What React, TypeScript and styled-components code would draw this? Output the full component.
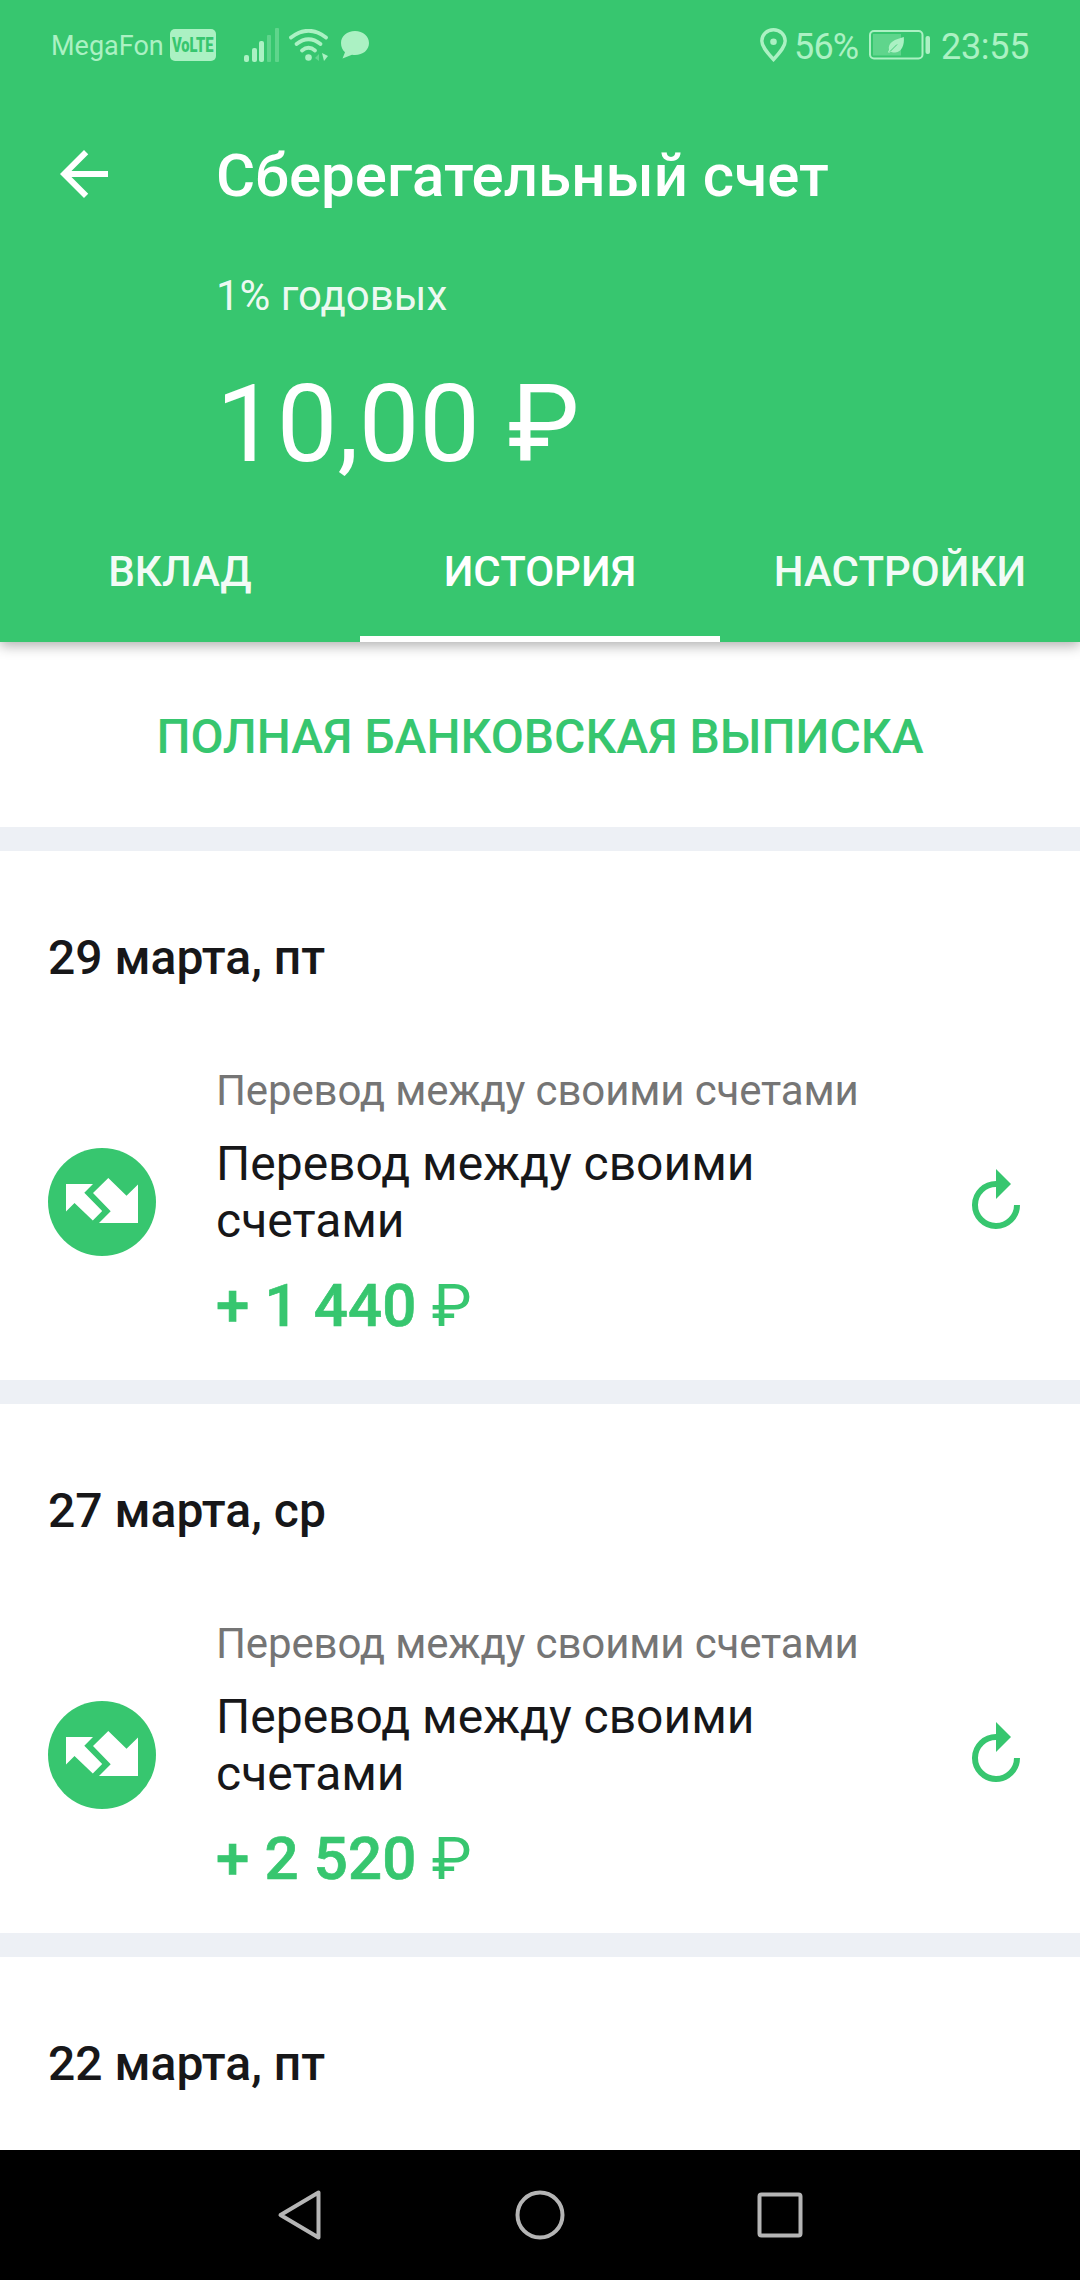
import React from 'react';
import styled, { createGlobalStyle } from 'styled-components';

const GREEN = '#37c66f';
const STATUS = '#abf1c3';

const GlobalStyle = createGlobalStyle`
  body { margin: 0; background: #fff; }
  * { box-sizing: border-box; }
`;

const Screen = styled.div`
  display: flex;
  flex-direction: column;
  width: 1080px;
  height: 2280px;
  overflow: hidden;
  background: #fff;
  font-family: Roboto, 'Noto Sans', sans-serif;
  color: #171719;
`;

const Header = styled.header`
  position: relative;
  z-index: 1;
  flex: none;
  display: flex;
  flex-direction: column;
  height: 642px;
  background: ${GREEN};
  color: #fff;
  box-shadow: 0 4px 12px rgba(0, 0, 0, 0.3);
`;

const StatusBar = styled.div`
  display: flex;
  justify-content: space-between;
  height: 92px;
  padding: 0 51px;
  color: ${STATUS};
`;

const StatusGroup = styled.div`
  display: flex;
  align-items: center;
  height: 90px;
`;

const Carrier = styled.span`
  width: 119px;
  padding-top: 2px;
  font-size: 27px;
  line-height: 40px;
`;

const Volte = styled.span`
  display: flex;
  align-items: center;
  justify-content: center;
  width: 46px;
  height: 32px;
  margin-right: 28px;
  border-radius: 5px;
  background: ${STATUS};
  color: ${GREEN};
  font-size: 21px;
  font-weight: 900;
`;

const VolteLabel = styled.span`
  flex: none;
  transform: scaleX(0.7);
`;

const StatusText = styled.span<{ $width: number; $spacing: number }>`
  width: ${(p) => p.$width}px;
  padding-top: 3px;
  font-size: 36px;
  line-height: 50px;
  letter-spacing: ${(p) => p.$spacing}px;
  white-space: nowrap;
`;

const Icon = styled.svg<{ $gap?: number }>`
  display: block;
  flex: none;
  margin-right: ${(p) => p.$gap ?? 0}px;
`;

const Toolbar = styled.div`
  display: flex;
  align-items: center;
  height: 168px;
  padding-left: 48px;
`;

const BackButton = styled.button`
  display: flex;
  width: 168px;
  margin-bottom: 4px;
  padding: 0;
  border: 0;
  background: none;
`;

const Title = styled.h1`
  margin: 0;
  font-size: 60px;
  font-weight: 500;
  line-height: 70px;
`;

const Rate = styled.div`
  height: 70px;
  padding-left: 216px;
  font-size: 42px;
  line-height: 72px;
  color: rgba(255, 255, 255, 0.92);
`;

const Balance = styled.div`
  height: 174px;
  padding-left: 216px;
  font-size: 108px;
  line-height: 188px;
`;

const BalanceCurrency = styled.span`
  margin-left: 1px;
`;

const Tabs = styled.nav`
  display: grid;
  grid-template-columns: repeat(3, 360px);
  height: 138px;
`;

const Tab = styled.button<{ $active?: boolean }>`
  padding: 3px 0 0 0;
  border: 0;
  border-bottom: 6px solid ${(p) => (p.$active ? '#fff' : 'transparent')};
  background: none;
  color: ${(p) => (p.$active ? '#fff' : 'rgba(255, 255, 255, 0.94)')};
  font: 500 42px / 129px Roboto, sans-serif;
  text-align: center;
`;

const Content = styled.main`
  flex: 1;
  min-height: 0;
  overflow: hidden;
`;

const StatementButton = styled.button`
  display: block;
  width: 100%;
  height: 185px;
  padding: 0;
  border: 0;
  background: #fff;
  color: ${GREEN};
  font: 500 48px / 189px Roboto, sans-serif;
`;

const Day = styled.section`
  height: 553px;
  border-top: 24px solid #edf0f5;
`;

const DayTitle = styled.h2`
  margin: 0;
  padding: 79px 48px 0;
  font-size: 48px;
  font-weight: 500;
  line-height: 56px;
`;

const Operation = styled.article`
  display: grid;
  grid-template-columns: 168px 650px 1fr;
  align-items: center;
  padding: 77px 54px 0 48px;
`;

const Details = styled.div`
  display: flex;
  flex-direction: column;
`;

const Category = styled.div`
  font-size: 42px;
  line-height: 56px;
  letter-spacing: -0.14px;
  color: #757575;
`;

const Name = styled.div`
  width: 600px;
  margin-top: 16px;
  font-size: 48px;
  line-height: 57px;
`;

const Amount = styled.div`
  margin: 22px 0 1px;
  font-size: 60px;
  font-weight: 500;
  line-height: 69px;
  letter-spacing: 0.15px;
  color: ${GREEN};
  -webkit-text-stroke: 0.7px ${GREEN};
`;

const Currency = styled.span`
  font-weight: 400;
  -webkit-text-stroke: 0;
`;

const RepeatButton = styled.button`
  display: flex;
  justify-content: flex-end;
  padding: 0;
  border: 0;
  background: none;
`;

const NavBar = styled.footer`
  flex: none;
  display: flex;
  align-items: center;
  justify-content: center;
  gap: 192px;
  height: 130px;
  padding-right: 2px;
  background: #000;
`;

const SignalIcon = () => (
  <Icon $gap={9} width="36" height="34" viewBox="0 0 36 34" fill={STATUS}>
    <rect x="0" y="27" width="5" height="7" rx="2" />
    <rect x="8" y="20" width="5" height="14" rx="2" />
    <rect x="15" y="13" width="5" height="21" rx="2" />
    <rect x="23" y="7" width="4" height="27" rx="1" opacity="0.35" />
    <rect x="31" y="0" width="4" height="34" rx="1" opacity="0.35" />
  </Icon>
);

const WifiIcon = () => (
  <Icon $gap={12} width="40" height="33" viewBox="0 0 40 33" fill="none" stroke={STATUS} strokeWidth="3.8" strokeLinecap="round">
    <path d="M2 8.500Q19.500-5 37 8.500" />
    <path d="M7.500 15Q19.500 5.500 31.500 15" />
    <path d="M13 21.500Q19.500 16 26 21.500" />
    <circle cx="19.500" cy="28.500" r="3.300" fill={STATUS} stroke="none" />
    <path d="M33 24l6 3-4 5z" fill={STATUS} stroke="none" />
    <path d="M26 29l4-4v7z" fill={STATUS} stroke="none" opacity="0.4" />
  </Icon>
);

const ChatIcon = () => (
  <Icon width="28" height="28" viewBox="0 0 28 28" fill={STATUS}>
    <path d="M14 0C6 0 0 5 0 12c0 4 1.500 7 4 9.200L1.500 27.600 11 23.800c1 .2 2 .2 3 .2 8 0 14-5 14-12S22 0 14 0z" />
  </Icon>
);

const PinIcon = () => (
  <Icon $gap={7} width="27" height="34" viewBox="0 0 27 34">
    <path d="M13.500 1.800C7 1.800 1.800 6.600 1.800 13c0 5 4 10 11.700 18.500C21.200 23 25.200 18 25.200 13c0-6.400-5.200-11.200-11.700-11.200z" fill="none" stroke={STATUS} strokeWidth="3.400" />
    <circle cx="13.500" cy="13.700" r="3.300" fill={STATUS} />
  </Icon>
);

const BatteryIcon = () => (
  <Icon $gap={10} width="62" height="30" viewBox="0 0 62 30">
    <rect x="1" y="1" width="52.500" height="27.500" rx="4" fill="none" stroke={STATUS} strokeWidth="2" />
    <rect x="4" y="4" width="28" height="21.500" fill={STATUS} opacity="0.35" />
    <path d="M34.800 7c.8 8-2 15-8.500 15.500-2.300.2-3.500-.2-4.500-.7l-2 1.200-.8-1.200 1-1.800c-1.500-8 6.300-10.500 14.800-13z" fill={STATUS} />
    <path d="M21 21.500l7-7" stroke={GREEN} strokeWidth="0.900" />
    <rect x="56.500" y="6" width="4.500" height="18" rx="2" fill={STATUS} />
  </Icon>
);

const BackIcon = () => (
  <Icon width="72" height="72" viewBox="0 0 24 24" fill="#fff">
    <path d="M20 11H7.830l5.590-5.590L12 4l-8 8 8 8 1.410-1.410L7.830 13H20v-2z" />
  </Icon>
);

const TransferIcon = () => (
  <Icon width="108" height="108" viewBox="0 0 108 108">
    <circle cx="54" cy="54" r="54" fill={GREEN} />
    <path d="M18 36H45L36.300 44.800 54.200 63 44.800 72.500 26.500 55 18 63.500z" fill="#fff" />
    <path d="M45 45L60.300 30 78.500 47.800 90 36.500V75H51L62.700 63.300z" fill="#fff" />
  </Icon>
);

const RepeatIcon = () => (
  <Icon width="54" height="66" viewBox="0 0 54 66">
    <path d="M24.500 15A21 21 0 1 0 45 36" fill="none" stroke={GREEN} strokeWidth="6" />
    <path d="M24 0L39 15 24 30z" fill={GREEN} />
  </Icon>
);

const operations = [
  { day: '29 марта, пт', amount: '+ 1 440' },
  { day: '27 марта, ср', amount: '+ 2 520' },
];

export default function App() {
  return (
    <>
      <GlobalStyle />
      <Screen>
        <Header>
          <StatusBar>
            <StatusGroup>
              <Carrier>MegaFon</Carrier>
              <Volte>
                <VolteLabel>VoLTE</VolteLabel>
              </Volte>
              <SignalIcon />
              <WifiIcon />
              <ChatIcon />
            </StatusGroup>
            <StatusGroup>
              <PinIcon />
              <StatusText $width={75} $spacing={-0.8}>56%</StatusText>
              <BatteryIcon />
              <StatusText $width={88} $spacing={-0.3}>23:55</StatusText>
            </StatusGroup>
          </StatusBar>
          <Toolbar>
            <BackButton aria-label="Назад">
              <BackIcon />
            </BackButton>
            <Title>Сберегательный счет</Title>
          </Toolbar>
          <Rate>1% годовых</Rate>
          <Balance>
            10,00 <BalanceCurrency>₽</BalanceCurrency>
          </Balance>
          <Tabs>
            <Tab>ВКЛАД</Tab>
            <Tab $active>ИСТОРИЯ</Tab>
            <Tab>НАСТРОЙКИ</Tab>
          </Tabs>
        </Header>
        <Content>
          <StatementButton>ПОЛНАЯ БАНКОВСКАЯ ВЫПИСКА</StatementButton>
          {operations.map((op) => (
            <Day key={op.day}>
              <DayTitle>{op.day}</DayTitle>
              <Operation>
                <TransferIcon />
                <Details>
                  <Category>Перевод между своими счетами</Category>
                  <Name>Перевод между своими счетами</Name>
                  <Amount>
                    {op.amount} <Currency>₽</Currency>
                  </Amount>
                </Details>
                <RepeatButton aria-label="Повторить">
                  <RepeatIcon />
                </RepeatButton>
              </Operation>
            </Day>
          ))}
          <Day>
            <DayTitle>22 марта, пт</DayTitle>
          </Day>
        </Content>
        <NavBar>
          <Icon width="48" height="54" viewBox="0 0 48 54" fill="none" stroke="#b5b5b5" strokeWidth="4" strokeLinejoin="round">
            <path d="M43.500 4.500V49.500L5.500 27z" />
          </Icon>
          <Icon width="50" height="50" viewBox="0 0 50 50" fill="none" stroke="#b5b5b5" strokeWidth="4">
            <circle cx="25" cy="25" r="22.500" />
          </Icon>
          <Icon width="46" height="46" viewBox="0 0 46 46" fill="none" stroke="#b5b5b5" strokeWidth="4">
            <rect x="2.500" y="2.500" width="41" height="41" rx="2" />
          </Icon>
        </NavBar>
      </Screen>
    </>
  );
}
